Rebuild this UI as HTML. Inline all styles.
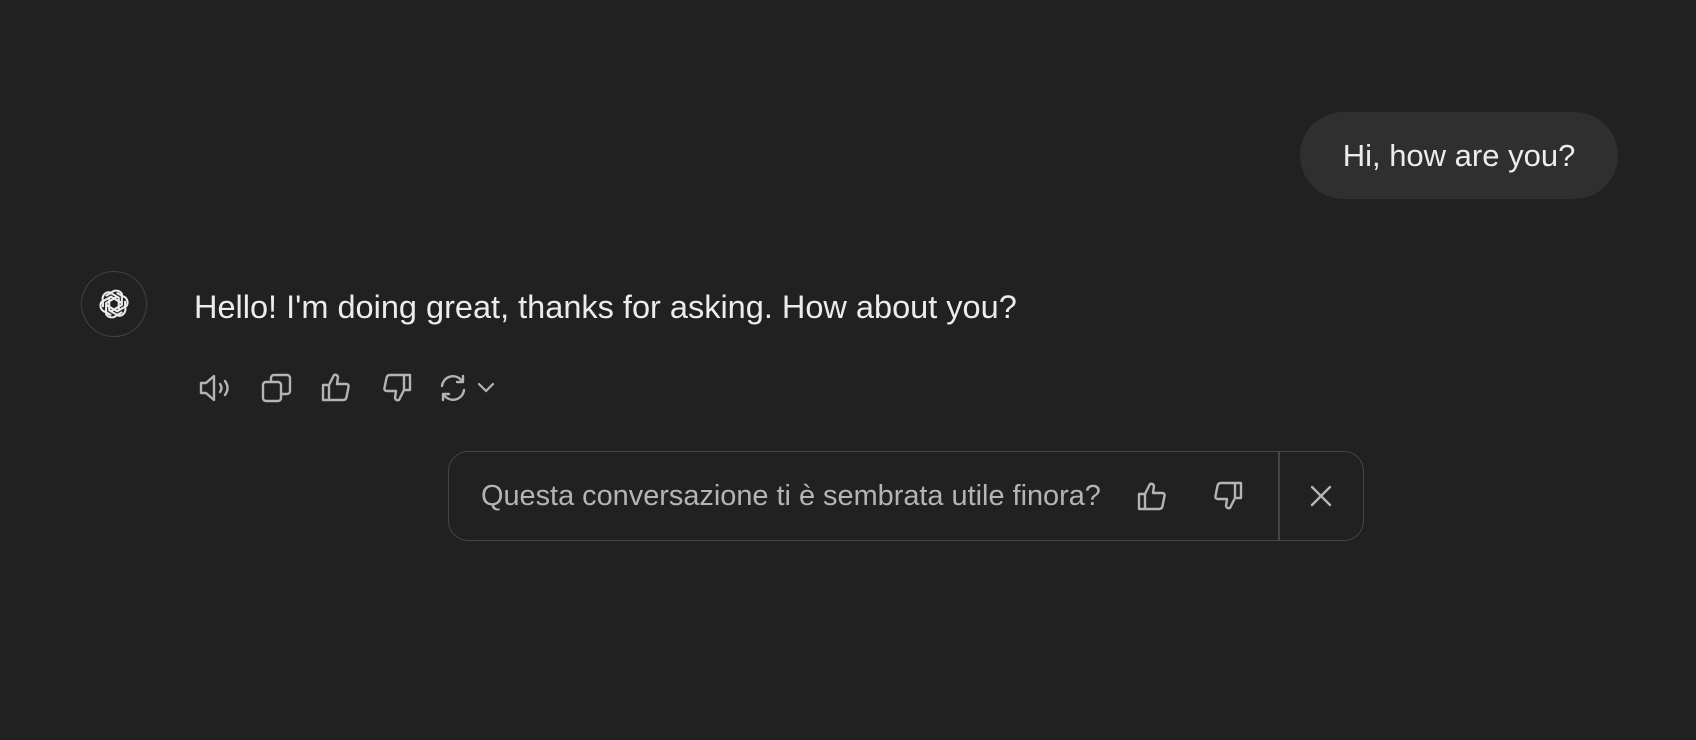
<!DOCTYPE html>
<html><head><meta charset="utf-8"><style>
body{margin:0;width:1696px;height:740px;background:#212121;font-family:"Liberation Sans",sans-serif;position:relative;overflow:hidden}
.a{position:absolute}
.bub{left:1300px;top:112px;width:318px;height:87px;border-radius:44px;background:#2f2f2f;color:#ececec;font-size:31px;line-height:87px;text-align:center}
.av{left:81px;top:271px;width:66px;height:66px;border:1.5px solid #424242;border-radius:50%;box-sizing:border-box}
.msg{left:194px;top:287px;color:#ececec;font-size:32.5px;line-height:40px;white-space:nowrap}
svg{position:absolute}
.fb{left:448px;top:451px;width:916px;height:90px;border:1.5px solid #454545;border-radius:20px;box-sizing:border-box}
.fbt{left:481px;top:478px;color:#b4b4b4;font-size:28.9px;line-height:36px;white-space:nowrap}
.div{left:1278px;top:451px;width:1.5px;height:90px;background:#454545}
</style></head><body>
<div class="a bub">Hi, how are you?</div>
<div class="a av"></div>
<svg style="left:95px;top:285px" width="38" height="38" viewBox="0 0 24 24" fill="none" stroke="#ececec" stroke-width="1.3">
<g transform="translate(12 12)">
<path d="M-3 -4 L-3 4 L3 7.5 A4.2 4.2 0 0 0 7 2 L7 -2" transform="rotate(0)"/>
<path d="M-3 -4 L-3 4 L3 7.5 A4.2 4.2 0 0 0 7 2 L7 -2" transform="rotate(60)"/>
<path d="M-3 -4 L-3 4 L3 7.5 A4.2 4.2 0 0 0 7 2 L7 -2" transform="rotate(120)"/>
<path d="M-3 -4 L-3 4 L3 7.5 A4.2 4.2 0 0 0 7 2 L7 -2" transform="rotate(180)"/>
<path d="M-3 -4 L-3 4 L3 7.5 A4.2 4.2 0 0 0 7 2 L7 -2" transform="rotate(240)"/>
<path d="M-3 -4 L-3 4 L3 7.5 A4.2 4.2 0 0 0 7 2 L7 -2" transform="rotate(300)"/>
</g></svg>
<div class="a msg">Hello! I'm doing great, thanks for asking. How about you?</div>
<svg style="left:198px;top:373px" width="36" height="30" viewBox="0 0 36 30" fill="none" stroke="#b4b4b4" stroke-width="2.4" stroke-linejoin="round" stroke-linecap="round">
<path d="M3 10h5l8-7v24l-8-7H3z"/><path d="M22 11q3 4 0 8"/><path d="M27 8q5 7 0 14"/></svg>
<svg style="left:261px;top:372px" width="32" height="32" viewBox="0 0 32 32" fill="none" stroke="#b4b4b4" stroke-width="2.4" stroke-linejoin="round">
<rect x="2" y="10" width="18" height="19" rx="3"/><path d="M10 10V6a3 3 0 0 1 3-3h13a3 3 0 0 1 3 3v13a3 3 0 0 1-3 3h-6"/></svg>
<svg style="left:321px;top:371px" width="30" height="32" viewBox="0 0 30 32" fill="none" stroke="#b4b4b4" stroke-width="2.4" stroke-linejoin="round">
<path d="M2 14h6v15H2zM8 14l5-10q3-1 4 2l-1 7h9q3 0 2.5 3l-2 10q-.5 3-3.5 3H8"/></svg>
<svg style="left:382px;top:372px" width="30" height="32" viewBox="0 0 30 32" fill="none" stroke="#b4b4b4" stroke-width="2.4" stroke-linejoin="round">
<path d="M28 18h-6V3h6zM22 18l-5 10q-3 1-4-2l1-7H5q-3 0-2.5-3l2-10Q5 3 8 3h14"/></svg>
<svg style="left:438px;top:373px" width="30" height="30" viewBox="0 0 30 30" fill="none" stroke="#b4b4b4" stroke-width="2.4" stroke-linecap="round" stroke-linejoin="round">
<path d="M4 13A11 11 0 0 1 24 8"/><path d="M25 3v6h-6"/><path d="M26 17A11 11 0 0 1 6 22"/><path d="M5 27v-6h6"/></svg>
<svg style="left:476px;top:380px" width="20" height="14" viewBox="0 0 20 14" fill="none" stroke="#b4b4b4" stroke-width="2.2" stroke-linecap="round"><path d="M3 4l7 7 7-7"/></svg>
<div class="a fb"></div>
<div class="a div"></div>
<div class="a fbt">Questa conversazione ti è sembrata utile finora?</div>
<svg style="left:1137px;top:480px" width="30" height="32" viewBox="0 0 30 32" fill="none" stroke="#b4b4b4" stroke-width="2.4" stroke-linejoin="round">
<path d="M2 14h6v15H2zM8 14l5-10q3-1 4 2l-1 7h9q3 0 2.5 3l-2 10q-.5 3-3.5 3H8"/></svg>
<svg style="left:1213px;top:480px" width="30" height="32" viewBox="0 0 30 32" fill="none" stroke="#b4b4b4" stroke-width="2.4" stroke-linejoin="round">
<path d="M28 18h-6V3h6zM22 18l-5 10q-3 1-4-2l1-7H5q-3 0-2.5-3l2-10Q5 3 8 3h14"/></svg>
<svg style="left:1309px;top:484px" width="24" height="24" viewBox="0 0 24 24" fill="none" stroke="#b4b4b4" stroke-width="2.4" stroke-linecap="round"><path d="M3 3l18 18M21 3L3 21"/></svg>
</body></html>
